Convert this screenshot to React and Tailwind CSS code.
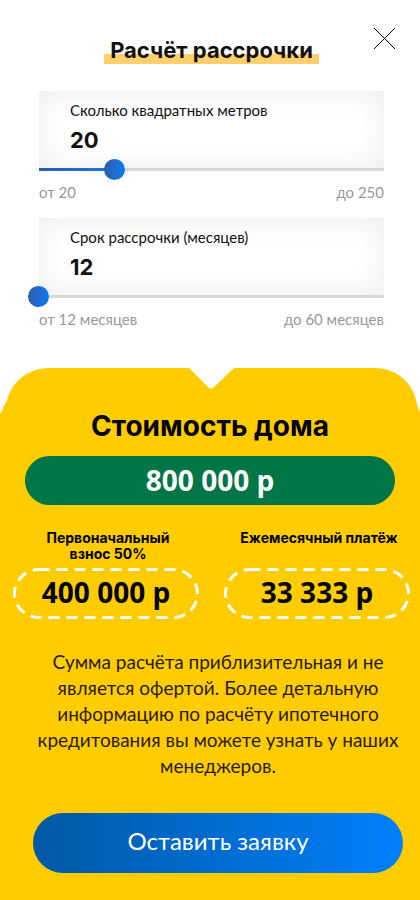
import { useState } from "react";

function RangeField({ id, label, value, position, from, to }) {
  const [fill, setFill] = useState(position);
  return (
    <div>
      <div className="flex h-[77px] flex-col bg-white px-[31px] pt-[7px] shadow-[inset_0_0_30px_#ececec]">
        <label htmlFor={id} className="text-[15px] leading-6 whitespace-nowrap text-[#111]">
          {label}
        </label>
        <input
          id={id}
          type="text"
          inputMode="numeric"
          defaultValue={value}
          className="w-full bg-transparent font-[Inter,sans-serif] text-[22px] leading-9 font-bold text-[#111] outline-none"
        />
      </div>
      <div className="relative h-[3px] bg-[#d8d8d8]">
        <div
          className="h-full bg-linear-to-r from-[#2b5ca8] to-[#0b78ee]"
          style={{ width: `${fill}%` }}
        />
        <input
          type="range"
          min="0"
          max="100"
          value={fill}
          onChange={(e) => setFill(Number(e.target.value))}
          aria-label={label}
          className="absolute -inset-x-[11px] -top-[9px] h-[21px] cursor-pointer appearance-none bg-transparent [&::-webkit-slider-thumb]:size-[21px] [&::-webkit-slider-thumb]:appearance-none [&::-webkit-slider-thumb]:rounded-full [&::-webkit-slider-thumb]:bg-linear-to-r [&::-webkit-slider-thumb]:from-[#2b5ca8] [&::-webkit-slider-thumb]:to-[#007bf5]"
        />
      </div>
      <div className="mt-[11px] flex justify-between text-[15px] leading-5 text-[#999]">
        <span>{from}</span>
        <span>{to}</span>
      </div>
    </div>
  );
}

function DashedAmount({ label, children }) {
  return (
    <div className="flex flex-1 flex-col">
      <p className="flex h-8 items-start justify-center pl-1 text-center text-sm leading-4 font-bold whitespace-nowrap">
        {label}
      </p>
      <div className="relative mt-[6px] flex h-[51px] items-center justify-center pb-1">
        <svg className="absolute inset-0 size-full overflow-visible" aria-hidden="true">
          <rect
            x="1.5"
            y="1.5"
            rx="24"
            fill="none"
            stroke="#fff"
            strokeWidth="3"
            strokeDasharray="11 7"
            className="h-[calc(100%-3px)] w-[calc(100%-3px)]"
          />
        </svg>
        <span className="font-['Open_Sans',sans-serif] text-[28px] leading-9 font-bold">
          {children}
        </span>
      </div>
    </div>
  );
}

export default function App() {
  return (
    <main className="relative bg-white font-[Lato,sans-serif] text-black">
      <button
        type="button"
        aria-label="Закрыть"
        className="absolute top-7 right-6 size-[23px] cursor-pointer"
      >
        <svg viewBox="0 0 23 23" className="size-full" fill="none" stroke="#000" strokeWidth="1">
          <path d="M1 0 22 21M22 0 1 21" />
        </svg>
      </button>

      <section className="flex flex-col px-9 pt-9 pl-[39px]">
        <h1 className="self-center bg-linear-to-b from-transparent from-[65%] to-[#ffcf6b] to-[65%] px-[6px] font-[Inter,sans-serif] text-[22px] leading-7 font-bold text-[#111]">
          Расчёт рассрочки
        </h1>
        <div className="mt-[27px] flex flex-col gap-4">
          <RangeField
            id="area"
            label="Сколько квадратных метров"
            value="20"
            position={22}
            from="от 20"
            to="до 250"
          />
          <RangeField
            id="term"
            label="Срок рассрочки (месяцев)"
            value="12"
            position={0}
            from="от 12 месяцев"
            to="до 60 месяцев"
          />
        </div>
      </section>

      <section className="mt-[39px] font-[Inter,sans-serif]">
        <svg
          viewBox="0 0 420 46"
          preserveAspectRatio="none"
          className="block h-[46px] w-full"
          fill="#ffcc00"
          aria-hidden="true"
        >
          <path d="M0 46C3 42 3 38 7 33C11 14 28 0 50 0H189L208 19Q211 22 214 19L234 0H375C397 0 414 16 417 36Q418 41 420 44V46Z" />
        </svg>
        <div className="bg-[#ffcc00] pb-[27px]">
          <h2 className="text-center text-[28px] leading-6 font-bold">Стоимость дома</h2>
          <p className="mx-[25px] mt-[18px] rounded-full bg-[#007545] text-center font-['Open_Sans',sans-serif] text-[28px] leading-[49px] font-bold text-white">
            800 000 р
          </p>
          <div className="mt-[25px] flex gap-[25px] pr-[10px] pl-[13px]">
            <DashedAmount
              label={
                <span>
                  Первоначальный
                  <br />
                  взнос 50%
                </span>
              }
            >
              400 000 р
            </DashedAmount>
            <DashedAmount label="Ежемесячный платёж">33 333 р</DashedAmount>
          </div>
          <p className="mt-[30px] pr-4 pl-8 text-center font-[Lato,sans-serif] text-[19px] leading-[26px] text-[#2b1c00]">
            Сумма расчёта приблизительная и не является офертой. Более детальную информацию по
            расчёту ипотечного кредитования вы можете узнать у наших менеджеров.
          </p>
          <div className="mt-[34px] pr-[17px] pl-[33px]">
            <button
              type="button"
              className="h-[60px] w-full cursor-pointer rounded-full bg-linear-to-r from-[#0059a5] to-[#0080fc] pb-1 font-[Lato,sans-serif] text-2xl text-white"
            >
              Оставить заявку
            </button>
          </div>
        </div>
      </section>
    </main>
  );
}
